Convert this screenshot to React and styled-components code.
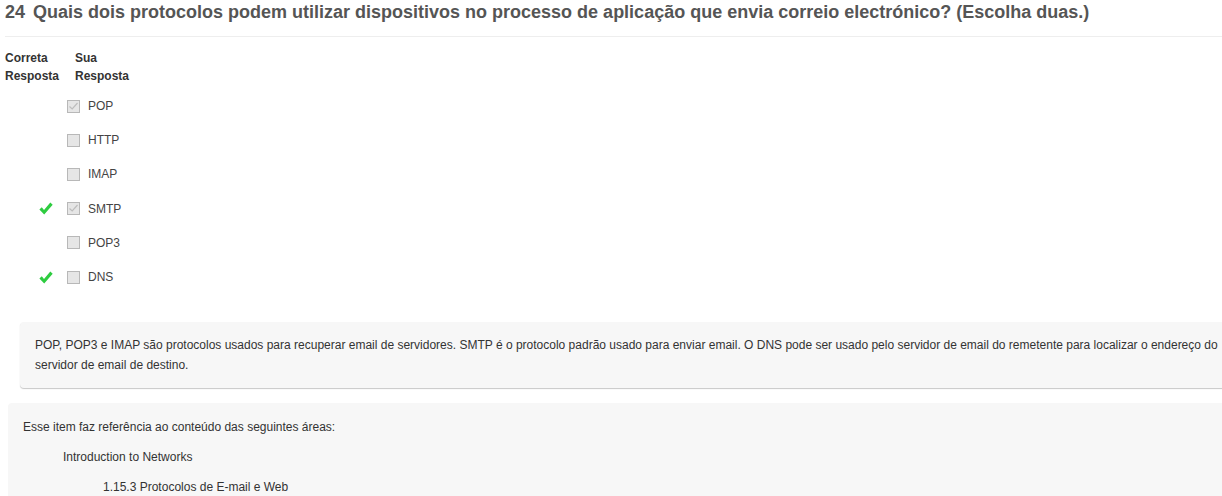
import React from 'react'
import styled, { createGlobalStyle } from 'styled-components'

const GlobalStyle = createGlobalStyle`
  body {
    margin: 0;
    background: #fff;
    overflow: hidden;
    font-family: "Liberation Sans", Arial, sans-serif;
    color: #333;
  }
`

const Page = styled.div`
  width: 1240px;
`

const Title = styled.h2`
  margin: 0;
  padding: 0 5px;
  font-size: 18px;
  line-height: 24px;
  font-weight: bold;
  color: #555;
`

const Num = styled.span`
  margin-right: 8px;
`

const Divider = styled.hr`
  margin: 12px 0 12px 5px;
  border: 0;
  border-top: 1px solid #eee;
`

const HeadRow = styled.div`
  display: flex;
  padding-left: 5px;
  font-size: 12px;
  line-height: 18px;
  font-weight: bold;
`

const HeadCell = styled.div`
  width: ${p => p.w}px;
`

const Options = styled.div`
  margin-top: 4px;
`

const OptionRow = styled.div`
  display: flex;
  align-items: center;
  height: 34.2px;
  font-size: 12px;
`

const CorrectCell = styled.div`
  width: 67px;
  padding-right: 14px;
  box-sizing: border-box;
  display: flex;
  justify-content: flex-end;
  align-items: center;
  height: 14px;
`

const Box = styled.span`
  width: 13px;
  height: 13px;
  box-sizing: border-box;
  border: 1px solid #b8b8b8;
  background: #e6e6e6;
  margin-right: 8px;
  display: flex;
  align-items: center;
  justify-content: center;
`

const Label = styled.span`
  color: #444;
`

const Feedback = styled.div`
  margin: 28px 0 0 20px;
  padding: 13px 15px;
  background: #f7f7f7;
  border-radius: 4px;
  box-shadow: 0 1px 1px rgba(0, 0, 0, 0.22);
  font-size: 12px;
  line-height: 20px;
`

const Areas = styled.div`
  margin: 15px 0 0 8px;
  padding: 14px 15px 0;
  background: #f7f7f7;
  border-radius: 4px 0 0 0;
  font-size: 12px;
  line-height: 20px;
  height: 80px;
`

const AreaLine = styled.div`
  padding-left: ${p => p.indent || 0}px;
  margin-bottom: ${p => p.gap || 0}px;
`

const GreenCheck = () => (
  <svg width="14" height="13" viewBox="0 0 14 13">
    <path
      d="M0.4 7.4 L2.8 5.2 L5 8 L11.3 0.6 L13.7 2.7 L5.2 12.4 Z"
      fill="#2ecc40"
    />
  </svg>
)

const GrayCheck = () => (
  <svg width="11" height="11" viewBox="0 0 11 11">
    <path d="M1.5 5.5 L4.2 8 L9.5 2" fill="none" stroke="#bdbdbd" strokeWidth="1.2" />
  </svg>
)

const options = [
  { label: 'POP', chosen: true, correct: false },
  { label: 'HTTP', chosen: false, correct: false },
  { label: 'IMAP', chosen: false, correct: false },
  { label: 'SMTP', chosen: true, correct: true },
  { label: 'POP3', chosen: false, correct: false },
  { label: 'DNS', chosen: false, correct: true },
]

export default function App() {
  return (
    <Page>
      <GlobalStyle />
      <Title>
        <Num>24</Num>Quais dois protocolos podem utilizar dispositivos no processo de aplicação que envia correio electrónico? (Escolha duas.)
      </Title>
      <Divider />
      <HeadRow>
        <HeadCell w={70}>Correta<br />Resposta</HeadCell>
        <HeadCell w={70}>Sua<br />Resposta</HeadCell>
      </HeadRow>
      <Options>
        {options.map(o => (
          <OptionRow key={o.label}>
            <CorrectCell>{o.correct && <GreenCheck />}</CorrectCell>
            <Box>{o.chosen && <GrayCheck />}</Box>
            <Label>{o.label}</Label>
          </OptionRow>
        ))}
      </Options>
      <Feedback>
        POP, POP3 e IMAP são protocolos usados para recuperar email de servidores. SMTP é o protocolo padrão usado para enviar email. O DNS pode ser usado pelo servidor de email do remetente para localizar o endereço do servidor de email de destino.
      </Feedback>
      <Areas>
        <AreaLine gap={10}>Esse item faz referência ao conteúdo das seguintes áreas:</AreaLine>
        <AreaLine indent={40} gap={10}>Introduction to Networks</AreaLine>
        <AreaLine indent={80}>1.15.3 Protocolos de E-mail e Web</AreaLine>
      </Areas>
    </Page>
  )
}
